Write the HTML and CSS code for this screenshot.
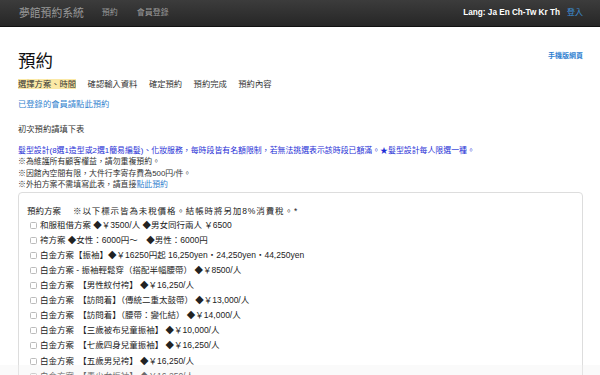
FILE: index.html
```html
<!DOCTYPE html>
<html lang="zh-Hant">
<head>
<meta charset="utf-8">
<title>夢館預約系統</title>
<link rel="stylesheet" href="styles.css">
</head>
<body>
<header class="navbar">
  <div class="nav-left">
    <span class="brand">夢館預約系統</span>
    <a class="nav-link" href="#">預約</a>
    <a class="nav-link" href="#">會員登錄</a>
  </div>
  <div class="nav-right">
    <span class="lang">Lang: Ja En Ch-Tw Kr Th</span>
    <a class="login" href="#">登入</a>
  </div>
</header>
<main class="container">
  <div class="title-row">
    <h1 class="title">預約</h1>
    <a class="mobile" href="#">手機版網頁</a>
  </div>
  <ul class="steps">
    <li class="step active">選擇方案、時間</li>
    <li class="step">確認輸入資料</li>
    <li class="step">確定預約</li>
    <li class="step">預約完成</li>
    <li class="step">預約內容</li>
  </ul>
  <a class="member" href="#">已登錄的會員請點此預約</a>
  <p class="first">初次預約請填下表</p>
  <div class="notes">
    <p class="note-blue">髮型設計(8選1造型或2選1簡易編髮)、化妝服務，每時段皆有名額限制，若無法挑選表示該時段已額滿。★髮型設計每人限選一種。</p>
    <p class="note">※為維護所有顧客權益，請勿重複預約。</p>
    <p class="note">※因館內空間有限，大件行李寄存費為500円/件。</p>
    <p class="note">※外拍方案不需填寫此表，請直接<a class="inline-link" href="#">點此預約</a></p>
  </div>
  <section class="box">
    <div class="box-title">預約方案<span class="tax">※以下標示皆為未稅價格。結帳時將另加8%消費稅。*</span></div>
    <label class="opt"><span class="cb"></span>和服租借方案 ◆￥3500/人 ◆男女同行兩人 ￥6500</label>
    <label class="opt"><span class="cb"></span>袴方案 ◆女性：6000円～　◆男性：6000円</label>
    <label class="opt"><span class="cb"></span>白金方案【振袖】◆￥16250円起 16,250yen・24,250yen・44,250yen</label>
    <label class="opt"><span class="cb"></span>白金方案 - 振袖輕鬆穿（搭配半幅腰帶） ◆￥8500/人</label>
    <label class="opt"><span class="cb"></span>白金方案　【男性紋付袴】 ◆￥16,250/人</label>
    <label class="opt"><span class="cb"></span>白金方案　【訪問着】（傳統二重太鼓帶） ◆￥13,000/人</label>
    <label class="opt"><span class="cb"></span>白金方案　【訪問着】（腰帶：變化結） ◆￥14,000/人</label>
    <label class="opt"><span class="cb"></span>白金方案　【三歲被布兒童振袖】 ◆￥10,000/人</label>
    <label class="opt"><span class="cb"></span>白金方案　【七歲四身兒童振袖】 ◆￥16,250/人</label>
    <label class="opt"><span class="cb"></span>白金方案　【五歲男兒袴】 ◆￥16,250/人</label>
    <label class="opt"><span class="cb"></span>白金方案　【青少女振袖】 ◆￥16,250/人</label>
  </section>
</main>
<div class="bottom-fade"></div>
</body>
</html>
```
FILE: styles.css
```css
* { box-sizing: border-box; }
html, body { margin: 0; padding: 0; background: #fff; }
body {
  font-family: "Liberation Sans", "Noto Sans CJK TC", sans-serif;
  color: #333;
  overflow: hidden;
}
a { text-decoration: none; }
p { margin: 0; }

.navbar {
  height: 27px;
  background: linear-gradient(#3c3c3c, #262626);
  border-bottom: 1px solid #111;
  display: flex;
  align-items: center;
  justify-content: space-between;
  padding: 0 17px 0 19px;
}
.nav-left, .nav-right { display: flex; align-items: center; }
.brand {
  font-size: 10.8px;
  line-height: 14px;
  color: #9a9a9a;
  margin-right: 18px;
}
.nav-link {
  font-size: 8px;
  line-height: 12px;
  color: #9a9a9a;
  margin-right: 19px;
}
.lang {
  font-size: 8.2px;
  font-weight: bold;
  color: #fff;
  line-height: 12px;
}
.login {
  font-size: 8px;
  line-height: 12px;
  color: #3d8fd6;
  margin-left: 7px;
}

.container { padding: 24px 17px 0 18px; }
.title-row {
  display: flex;
  justify-content: space-between;
  align-items: flex-start;
}
.title {
  margin: 0;
  font-size: 17.5px;
  line-height: 20px;
  font-weight: normal;
  color: #111;
}
.mobile {
  font-size: 7px;
  line-height: 10px;
  color: #2f7fd0;
  font-weight: bold;
}
.steps {
  list-style: none;
  margin: 8px 0 0;
  padding: 0;
  display: flex;
  gap: 11.5px;
}
.step {
  font-size: 8.3px;
  line-height: 10px;
  height: 10px;
  color: #333;
}
.step.active { background: #fbe9a6; }

.member {
  display: block;
  margin-top: 10px;
  font-size: 8.3px;
  line-height: 10px;
  color: #3584cf;
}
.first {
  margin-top: 15px;
  font-size: 8.3px;
  line-height: 10px;
  color: #333;
}
.notes { margin-top: 11px; }
.note-blue, .note {
  font-size: 7.9px;
  line-height: 11.3px;
  white-space: nowrap;
}
.note-blue { color: #1f2fd6; }
.note { color: #333; }
.inline-link { color: #3584cf; }

.box {
  margin-top: 1.5px;
  border: 1px solid #ddd;
  border-radius: 4px;
  padding: 11px 8px 0;
  height: 220px;
}
.box-title, .opt {
  display: flex;
  align-items: center;
  font-size: 8.5px;
  line-height: 15.1px;
  height: 15.1px;
  white-space: nowrap;
  color: #222;
}
.box-title { height: 14px; line-height: 14px; }
.tax { margin-left: 12px; letter-spacing: 0.9px; }
.cb {
  width: 7px;
  height: 7px;
  border: 1px solid #bbb;
  border-radius: 1.5px;
  background: #fff;
  margin: 0 3px 0 3px;
  flex: none;
}
.bottom-fade {
  position: fixed;
  left: 0;
  right: 0;
  bottom: 0;
  height: 10px;
  background: rgba(240, 240, 240, 0.35);
}
```
